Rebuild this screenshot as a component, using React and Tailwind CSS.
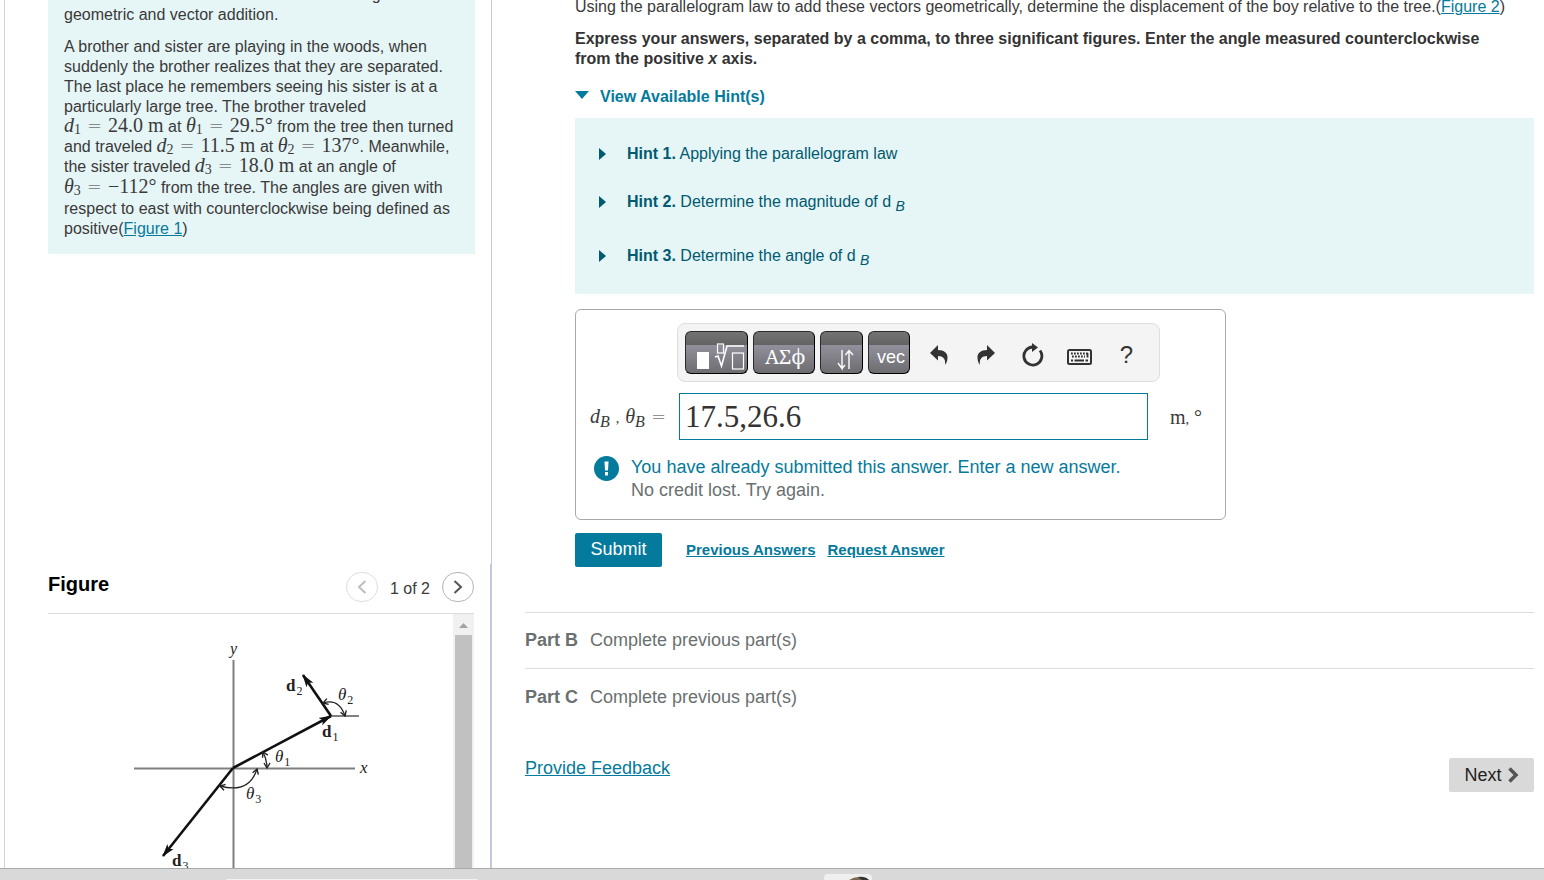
import { useState } from "react";

const Sym = ({ base, sub }) => (
  <span className="font-['Liberation_Serif',serif] text-xl leading-4">
    <i>{base}</i>
    <sub className="text-sm leading-none -bottom-0.5">{sub}</sub>
  </span>
);

const Eq = () => <span className="font-['DejaVu_Sans',sans-serif] font-extralight text-lg leading-4 mx-1.5">=</span>;

const Num = ({ children }) => (
  <span className="font-['Liberation_Serif',serif] text-xl leading-4">{children}</span>
);

const Problem = () => (
  <section className="ml-[43px] mr-4 -mt-[15px] bg-[#e6f5f6] px-4 pb-[15px] leading-5">
    <p className="mb-3">
      To find the sum of several vectors both using
      <br />
      geometric and vector addition.
    </p>
    <p>
      A brother and sister are playing in the woods, when
      <br />
      suddenly the brother realizes that they are separated.
      <br />
      The last place he remembers seeing his sister is at a
      <br />
      particularly large tree. The brother traveled
      <br />
      <Sym base="d" sub="1" /><Eq /><Num>24.0 m</Num> at <Sym base="θ" sub="1" /><Eq /><Num>29.5°</Num> from the tree then turned
      <br />
      and traveled <Sym base="d" sub="2" /><Eq /><Num>11.5 m</Num> at <Sym base="θ" sub="2" /><Eq /><Num>137°</Num>. Meanwhile,
      <br />
      the sister traveled <Sym base="d" sub="3" /><Eq /><Num>18.0 m</Num> at an angle of
      <br />
      <Sym base="θ" sub="3" /><Eq /><Num>−112°</Num><span className="leading-[22px]"> from the tree. The angles are given with</span>
      <br />
      respect to east with counterclockwise being defined as
      <br />
      positive(<a href="#figure" className="text-[#047a9c] underline">Figure 1</a>)
    </p>
  </section>
);

const VectorDiagram = () => (
  <svg width="405" height="300" viewBox="0 0 405 300" role="img" aria-label="Displacement vectors d1, d2 and d3" className="block">
    <defs>
      <marker id="head" markerUnits="userSpaceOnUse" markerWidth="14" markerHeight="10" refX="12" refY="5" orient="auto">
        <path d="M0 1 L13 5 L0 9 L3 5 Z" fill="#111" />
      </marker>
      <marker id="tip" markerUnits="userSpaceOnUse" markerWidth="8" markerHeight="8" refX="6" refY="4" orient="auto-start-reverse">
        <path d="M1 1 L6 4 L1 7" fill="none" stroke="#222" strokeWidth="1.4" />
      </marker>
    </defs>
    <g stroke="#808080" strokeWidth="2">
      <path d="M86 154.500H307" />
      <path d="M185.500 46V300" />
      <path d="M283 102H311" />
    </g>
    <g stroke="#111" strokeWidth="2.600" fill="none">
      <path d="M185 154L283 102" markerEnd="url(#head)" />
      <path d="M283 102L255 61" markerEnd="url(#head)" />
      <path d="M185 154L115 242" markerEnd="url(#head)" />
    </g>
    <g stroke="#222" strokeWidth="1.300" fill="none">
      <path d="M215 138Q219 146 219 154" markerStart="url(#tip)" markerEnd="url(#tip)" />
      <path d="M275 89Q291 84 297 102" markerStart="url(#tip)" markerEnd="url(#tip)" />
      <path d="M172 172Q201 180 209 155" markerStart="url(#tip)" markerEnd="url(#tip)" />
    </g>
    <g className="font-['Liberation_Serif',serif]" fill="#222" fontSize="17">
      <text x="182" y="40" fontStyle="italic" fontSize="16">y</text>
      <text x="312" y="159" fontStyle="italic">x</text>
      <text x="238" y="77" fontWeight="bold">d<tspan dx="1" dy="4" fontSize="12" fontWeight="normal">2</tspan></text>
      <text x="274" y="123" fontWeight="bold">d<tspan dx="1" dy="4" fontSize="12" fontWeight="normal">1</tspan></text>
      <text x="124" y="252" fontWeight="bold">d<tspan dx="1" dy="4" fontSize="12" fontWeight="normal">3</tspan></text>
      <text x="290" y="86" fontStyle="italic">θ<tspan dx="1" dy="4" fontSize="12" fontStyle="normal">2</tspan></text>
      <text x="227" y="148" fontStyle="italic">θ<tspan dx="1" dy="4" fontSize="12" fontStyle="normal">1</tspan></text>
      <text x="198" y="185" fontStyle="italic">θ<tspan dx="1" dy="4" fontSize="12" fontStyle="normal">3</tspan></text>
    </g>
  </svg>
);

const FigurePanel = () => (
  <section id="figure" className="mt-auto pt-2 pl-[43px] pr-4 border-r border-[#b8cce0]">
    <div className="flex items-center pb-[11px] border-b border-[#dcdcdc]">
      <h2 className="text-xl leading-6 font-bold text-black mb-1.5">Figure</h2>
      <button disabled aria-label="Previous figure" className="ml-auto w-8 h-[30px] rounded-full border border-[#dedede] flex items-center justify-center">
        <svg width="10" height="14" viewBox="0 0 10 14" fill="none" stroke="#bdbdbd" strokeWidth="2"><path d="M8.500 1L2 7L8.500 13" /></svg>
      </button>
      <span className="mx-3 pt-1 leading-5">1 of 2</span>
      <button aria-label="Next figure" className="w-8 h-[30px] rounded-full border border-[#b5b5b5] flex items-center justify-center">
        <svg width="10" height="14" viewBox="0 0 10 14" fill="none" stroke="#555" strokeWidth="2"><path d="M1.500 1L8 7L1.500 13" /></svg>
      </button>
    </div>
    <div className="flex h-[254px] overflow-hidden">
      <div className="flex-1 overflow-hidden"><VectorDiagram /></div>
      <div className="w-[21px] bg-[#f1f1f1] flex flex-col items-center">
        <svg width="21" height="21" viewBox="0 0 21 21" className="shrink-0"><path d="M6 14L10.500 9L15 14Z" fill="#a3a3a3" /></svg>
        <div className="w-[17px] flex-1 bg-[#c1c1c1]" />
      </div>
    </div>
  </section>
);

const HintRow = ({ n, className = "", children }) => (
  <button className={`flex items-end text-left text-[#005a70] leading-5 ${className}`}>
    <svg width="7" height="16" viewBox="0 0 7 16" className="mr-[21px] shrink-0"><path d="M0 0L7 6L0 12Z" fill="#005a70" /></svg>
    <span><b>Hint {n}.</b> {children}</span>
  </button>
);

const keyClass = "h-[43px] rounded-md border border-[#2a2a2a] border-b-black border-r-black text-white flex items-center overflow-hidden bg-[linear-gradient(#737373_0px,#636363_13px,#92909b_13px,#6d6d70_100%)]";
const toolClass = "w-[47px] h-[43px] pt-1 flex items-center justify-center text-[#333]";

const Toolbar = () => (
  <div className="ml-[101px] w-[483px] rounded-lg border border-[#dedede] bg-[#f4f4f4] p-[7px] flex gap-[5px]">
    <button aria-label="Templates" className={`${keyClass} w-[63px]`}>
      <svg width="61" height="41" viewBox="0 0 61 41" fill="none" stroke="white">
        <rect x="11" y="20" width="12" height="17" fill="white" stroke="none" />
        <rect x="31.500" y="12" width="6" height="9" strokeWidth="1.200" />
        <path d="M29 25L32 24L35.500 34L41 14H58" strokeWidth="1.600" />
        <rect x="46.500" y="21" width="11" height="16" strokeWidth="1.200" />
      </svg>
    </button>
    <button aria-label="Symbols" className={`${keyClass} w-[62px] pl-[11px] pt-2 font-['Noto_Serif','DejaVu_Serif',serif] text-xl`}>ΑΣϕ</button>
    <button aria-label="Arrows" className={`${keyClass} w-[43px] justify-end pr-2`}>
      <svg width="17" height="41" viewBox="0 0 17 41" fill="none" stroke="white" strokeWidth="1.400">
        <path d="M5 18V36M1 31L5 36.500V18M5 36.500L8 33M12 37V19M8.500 23L12 18.500L16 23" />
      </svg>
    </button>
    <button className={`${keyClass} w-[42px] pl-2 pt-2 text-lg`}>vec</button>
    <div className="flex">
      <button aria-label="Undo" className={toolClass}>
        <svg width="18" height="20" viewBox="0 0 18 20" fill="currentColor"><path d="M0 8L8 0V5C14 5 18 8 17.500 13C17.400 16 16.500 18 15 20C16 14 13 11 8 11V15.500Z" /></svg>
      </button>
      <button aria-label="Redo" className={toolClass}>
        <svg width="18" height="20" viewBox="0 0 18 20" fill="currentColor"><path d="M18 8L10 0V5C4 5 0 8 .5 13C.6 16 1.500 18 3 20C2 14 5 11 10 11V15.500Z" /></svg>
      </button>
      <button aria-label="Reset" className={toolClass}>
        <svg width="22" height="24" viewBox="0 0 22 24">
          <path d="M11 4A9 9 0 1 0 18 7.500" fill="none" stroke="currentColor" strokeWidth="2.800" />
          <path d="M10 0L16 4.500L10 9Z" fill="currentColor" />
        </svg>
      </button>
      <button aria-label="Keyboard shortcuts" className={toolClass}>
        <svg width="25" height="22" viewBox="0 0 25 22" fill="none" stroke="currentColor">
          <rect x="1" y="6" width="23" height="14" rx="1.500" strokeWidth="2" />
          <path d="M4 9.500H21M5 12.500H18" strokeWidth="1.800" strokeDasharray="1.800 1.200" />
          <path d="M20.500 9V13.500M4 16.500H6M7.500 16.500H17M18.500 16.500H21" strokeWidth="1.800" />
        </svg>
      </button>
      <button aria-label="Help" className={`${toolClass} text-2xl`}>?</button>
    </div>
  </div>
);

const AnswerCard = () => {
  const [answer, setAnswer] = useState("17.5,26.6");

  return (
    <div className="w-[651px] mt-[15px] rounded-md border border-[#a9a9a9] pt-[13px] pb-[17px]">
      <Toolbar />
      <div className="flex items-center mt-[11px]">
        <label htmlFor="answer" className="w-[103px] pl-3.5 whitespace-nowrap font-['Liberation_Serif',serif] text-xl">
          <i>d</i><sub className="text-base -bottom-1 italic">B</sub>
          <span className="text-sm mx-1.5">,</span>
          <i>θ</i><sub className="text-base -bottom-1 italic">B</sub>
          <span className="font-['DejaVu_Sans',sans-serif] font-extralight text-lg ml-1.5">=</span>
        </label>
        <input
          id="answer"
          value={answer}
          onChange={(e) => setAnswer(e.target.value)}
          className="w-[469px] h-[47px] border border-[#047a9c] px-[5px] font-['Liberation_Serif',serif] text-[31px] text-[#333]"
        />
        <span className="ml-[22px] font-['Liberation_Serif',serif] text-xl">m<span className="text-sm">,</span> °</span>
      </div>
      <div className="flex mt-4 pl-[18px] text-lg leading-[23px]">
        <svg width="25" height="25" viewBox="0 0 25 25" className="shrink-0 mr-3">
          <circle cx="12.500" cy="12.500" r="12.500" fill="#047a9c" />
          <path d="M10.500 5.500H14.500L14 14.500H11Z" fill="white" />
          <rect x="11" y="16" width="3" height="3.500" fill="white" />
        </svg>
        <div>
          <p className="text-[#047a9c]">You have already submitted this answer. Enter a new answer.</p>
          <p className="text-[#6a7070]">No credit lost. Try again.</p>
        </div>
      </div>
    </div>
  );
};

const PartRow = ({ name, className }) => (
  <div className={`border-t border-[#dcdcdc] text-lg leading-[22px] text-[#6a7070] ${className}`}>
    <b className="mr-3">{name}</b>Complete previous part(s)
  </div>
);

const App = () => {
  const [showHints, setShowHints] = useState(true);

  return (
    <div className="h-screen flex flex-col overflow-hidden bg-white font-['Liberation_Sans',sans-serif] text-base text-[#3a3a3a]">
      <div className="flex flex-1 min-h-0 overflow-hidden">
        <aside className="w-[488px] shrink-0 ml-1 border-l border-r border-l-[#d4d4d4] border-r-[#c3cad8] flex flex-col">
          <Problem />
          <FigurePanel />
        </aside>

        <main className="flex-1 min-w-0 pl-[33px] pr-2.5">
          <div className="pl-[50px] -mt-[3px] leading-5">
            <p className="whitespace-nowrap">
              Using the parallelogram law to add these vectors geometrically, determine the displacement of the boy relative to the tree.(<a href="#figure" className="text-[#047a9c] underline">Figure 2</a>)
            </p>
            <p className="mt-3 pr-8 font-bold text-[#333]">
              Express your answers, separated by a comma, to three significant figures. Enter the angle measured counterclockwise from the positive <i>x</i> axis.
            </p>
            <button onClick={() => setShowHints(!showHints)} aria-expanded={showHints} className="mt-[18px] flex items-center font-bold text-[#047a9c]">
              <svg width="14" height="12" viewBox="0 0 14 12" className="mr-[11px]"><path d="M0 0H14L7 8Z" fill="#047a9c" /></svg>
              View Available Hint(s)
            </button>
            {showHints && (
              <div className="mt-[11px] bg-[#e6f5f6] pl-6 pt-[26px] pb-7 flex flex-col items-start">
                <HintRow n="1">Applying the parallelogram law</HintRow>
                <HintRow n="2" className="mt-7">Determine the magnitude of d <sub className="text-sm italic">B</sub></HintRow>
                <HintRow n="3" className="mt-[34px]">Determine the angle of d <sub className="text-sm italic">B</sub></HintRow>
              </div>
            )}
            <AnswerCard />
            <div className="flex items-center mt-[13px]">
              <button className="w-[87px] h-[34px] rounded-xs bg-[#047a9c] text-white text-lg pb-0.5 mr-6">Submit</button>
              <a href="#previous" className="text-[15px] font-bold text-[#047a9c] underline mr-3">Previous Answers</a>
              <a href="#request" className="text-[15px] font-bold text-[#047a9c] underline">Request Answer</a>
            </div>
          </div>

          <div className="mt-[45px]">
            <PartRow name="Part B" className="pt-4 pb-[17px]" />
            <PartRow name="Part C" className="pt-[17px]" />
          </div>
          <div className="flex items-center justify-between mt-[46px]">
            <a href="#feedback" className="text-lg text-[#047a9c] underline mb-3.5">Provide Feedback</a>
            <button className="w-[85px] h-[34px] rounded-xs bg-[#d9d9d9] text-lg text-[#231f20] flex items-center justify-center gap-1.5">
              Next
              <svg width="11" height="16" viewBox="0 0 11 16" fill="none" stroke="#555" strokeWidth="3.500"><path d="M1.500 1.500L8 8L1.500 14.500" /></svg>
            </button>
          </div>
        </main>
      </div>

      <footer className="h-3 shrink-0 border-t border-[#aaa] bg-[#d9d9d9] flex items-end">
        <div className="ml-[226px] w-[252px] h-px rounded-t bg-[#f2f2f2]" />
        <div className="ml-[346px] w-12 h-1.5 rounded-t bg-[#efefef]">
          <svg width="48" height="6" viewBox="0 0 48 6"><path d="M25 6Q35 0 44 6Z" fill="#75694f" /><path d="M34 3Q41 2 45 6H38Z" fill="#333" /></svg>
        </div>
      </footer>
    </div>
  );
};

export default App;
